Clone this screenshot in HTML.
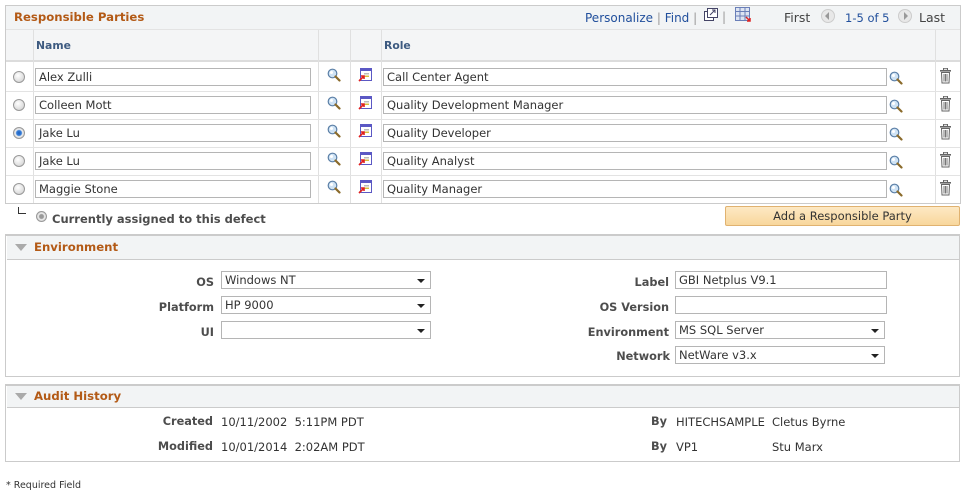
<!DOCTYPE html>
<html><head><meta charset="utf-8"><style>
*{box-sizing:border-box;margin:0;padding:0}
body{width:971px;height:493px;background:#fff;font-family:"DejaVu Sans","Liberation Sans",sans-serif;font-size:11.5px;color:#333;position:relative;overflow:hidden}
.a{position:absolute}
.box{position:absolute;border:1px solid #cbcbcb}
.title{position:absolute;font-weight:bold;font-size:11.7px;color:#b35a16}
.hdr{position:absolute;background:#f2f4f5}
.inp{position:absolute;border:1px solid #b5b5b5;height:18px;background:#fff;padding-left:3px;line-height:17px;font-size:11.5px;color:#333;white-space:nowrap}
.lbl{position:absolute;font-weight:bold;color:#4d4d4d;text-align:right;font-size:11.3px}
.caret{position:absolute;right:5px;top:7px;width:0;height:0;border-left:4px solid transparent;border-right:4px solid transparent;border-top:4px solid #222}
.radio{position:absolute;width:12px;height:12px;border-radius:50%;border:1px solid #999;background:radial-gradient(circle at 40% 35%,#fff,#ccc)}
.vl{position:absolute;width:1px;background:#e0e0e0}
.hl{position:absolute;height:1px;background:#e3e3e3}
.link{color:#214f9c}
</style></head><body>

<div class="box" style="left:5px;top:5px;width:956px;height:199px"></div>
<div class="hdr" style="left:6px;top:6px;width:954px;height:23px"></div>
<div class="title" style="left:14px;top:10px">Responsible Parties</div>
<div class="a link" style="left:585px;top:11px;font-size:12px">Personalize <span style="color:#999">|</span> Find <span style="color:#999">|</span></div>
<svg class="a" style="left:704px;top:8px" width="14" height="13"><rect x="0.5" y="3.5" width="9" height="9" fill="#fff" stroke="#446"/><rect x="3.5" y="0.5" width="10" height="9" fill="#fff" stroke="#446"/><path d="M6 7 L11 2 M8 2 H11 V5" stroke="#446" fill="none"/></svg>
<div class="a" style="left:722px;top:10px;color:#999;font-size:12px">|</div>
<svg class="a" style="left:735px;top:7px" width="17" height="16"><rect x="0.5" y="0.5" width="14" height="13" fill="#dde4f2" stroke="#6a7fb8"/><path d="M0 4.5H15M0 9H15M5 0V14M10 0V14" stroke="#6a7fb8"/><path d="M11 10 L15 14 M12 14 H15 V11" stroke="#d22" stroke-width="1.5" fill="none"/></svg>
<div class="a" style="left:784px;top:10px;font-size:12.5px;color:#444">First</div>
<div class="a" style="left:821px;top:9px;width:14px;height:14px;border-radius:50%;background:#e8e8e8;border:1px solid #ccc"></div>
<div class="a" style="left:825px;top:12px;width:0;height:0;border-top:4px solid transparent;border-bottom:4px solid transparent;border-right:4px solid #999"></div>
<div class="a link" style="left:845px;top:11px;font-size:11.5px">1-5 of 5</div>
<div class="a" style="left:898px;top:9px;width:14px;height:14px;border-radius:50%;background:#e8e8e8;border:1px solid #ccc"></div>
<div class="a" style="left:904px;top:12px;width:0;height:0;border-top:4px solid transparent;border-bottom:4px solid transparent;border-left:4px solid #999"></div>
<div class="a" style="left:919px;top:10px;font-size:12.5px;color:#444">Last</div>

<div class="a" style="left:6px;top:29px;width:954px;height:33px;background:#f4f5f6;border-top:1px solid #e3e3e3;border-bottom:2px solid #dcdcdc"></div>
<div class="a" style="left:36px;top:39px;font-weight:bold;color:#3d5a80;font-size:10.8px">Name</div>
<div class="a" style="left:384px;top:39px;font-weight:bold;color:#3d5a80;font-size:10.8px">Role</div>
<div class="vl" style="left:33px;top:30px;height:173px"></div>
<div class="vl" style="left:318px;top:30px;height:173px"></div>
<div class="vl" style="left:350px;top:30px;height:173px"></div>
<div class="vl" style="left:381px;top:30px;height:173px"></div>
<div class="vl" style="left:935px;top:30px;height:173px"></div>

<div class="hl" style="left:6px;top:91px;width:954px"></div>
<div class="hl" style="left:6px;top:119px;width:954px"></div>
<div class="hl" style="left:6px;top:147px;width:954px"></div>
<div class="hl" style="left:6px;top:175px;width:954px"></div>

<svg width="0" height="0" style="position:absolute"><defs>
<g id="mag"><circle cx="5.5" cy="5.5" r="4.3" fill="#cfe3f5" stroke="#5b7fa6" stroke-width="1.2"/><circle cx="4.5" cy="4.5" r="1.5" fill="#fff"/><path d="M8.5 8.5 L12.5 12.5" stroke="#8a6a2a" stroke-width="2.2" stroke-linecap="round"/></g>
<g id="win"><rect x="2.5" y="0.5" width="11" height="12" fill="#fff" stroke="#5b58c4"/><rect x="2.5" y="0.5" width="11" height="2.5" fill="#5b58c4"/><rect x="6" y="5" width="5" height="1.5" fill="#bbb"/><rect x="6" y="7.5" width="5" height="1.5" fill="#d8c040"/><path d="M1 13 L6 8 M3 8 H6 V11" stroke="#e02020" stroke-width="1.6" fill="none"/></g>
<g id="trash"><rect x="1" y="2" width="11" height="1.6" fill="#666"/><rect x="4.5" y="0.3" width="4" height="2" fill="none" stroke="#666"/><path d="M2.5 4.5 H10.5 L10 15 H3 Z" fill="#fff" stroke="#666"/><path d="M5 6V13.5M6.5 6V13.5M8 6V13.5" stroke="#777"/></g>
</defs></svg>

<div class="radio" style="left:13px;top:71px"></div>
<div class="inp" style="left:35px;top:68px;width:276px">Alex Zulli</div>
<svg class="a" style="left:327px;top:68px" width="14" height="14"><use href="#mag"/></svg>
<svg class="a" style="left:358px;top:68px" width="15" height="14"><use href="#win"/></svg>
<div class="inp" style="left:383px;top:68px;width:504px">Call Center Agent</div>
<svg class="a" style="left:889px;top:71px" width="14" height="14"><use href="#mag"/></svg>
<svg class="a" style="left:939px;top:68px" width="13" height="16"><use href="#trash"/></svg>

<div class="radio" style="left:13px;top:99px"></div>
<div class="inp" style="left:35px;top:96px;width:276px">Colleen Mott</div>
<svg class="a" style="left:327px;top:96px" width="14" height="14"><use href="#mag"/></svg>
<svg class="a" style="left:358px;top:96px" width="15" height="14"><use href="#win"/></svg>
<div class="inp" style="left:383px;top:96px;width:504px">Quality Development Manager</div>
<svg class="a" style="left:889px;top:99px" width="14" height="14"><use href="#mag"/></svg>
<svg class="a" style="left:939px;top:96px" width="13" height="16"><use href="#trash"/></svg>

<div class="radio" style="left:13px;top:127px;background:radial-gradient(circle,#1a5fc0 0,#3a7fd8 2.5px,#eee 3.5px,#ccc 6px)"></div>
<div class="inp" style="left:35px;top:124px;width:276px">Jake Lu</div>
<svg class="a" style="left:327px;top:124px" width="14" height="14"><use href="#mag"/></svg>
<svg class="a" style="left:358px;top:124px" width="15" height="14"><use href="#win"/></svg>
<div class="inp" style="left:383px;top:124px;width:504px">Quality Developer</div>
<svg class="a" style="left:889px;top:127px" width="14" height="14"><use href="#mag"/></svg>
<svg class="a" style="left:939px;top:124px" width="13" height="16"><use href="#trash"/></svg>

<div class="radio" style="left:13px;top:155px"></div>
<div class="inp" style="left:35px;top:152px;width:276px">Jake Lu</div>
<svg class="a" style="left:327px;top:152px" width="14" height="14"><use href="#mag"/></svg>
<svg class="a" style="left:358px;top:152px" width="15" height="14"><use href="#win"/></svg>
<div class="inp" style="left:383px;top:152px;width:504px">Quality Analyst</div>
<svg class="a" style="left:889px;top:155px" width="14" height="14"><use href="#mag"/></svg>
<svg class="a" style="left:939px;top:152px" width="13" height="16"><use href="#trash"/></svg>

<div class="radio" style="left:13px;top:183px"></div>
<div class="inp" style="left:35px;top:180px;width:276px">Maggie Stone</div>
<svg class="a" style="left:327px;top:180px" width="14" height="14"><use href="#mag"/></svg>
<svg class="a" style="left:358px;top:180px" width="15" height="14"><use href="#win"/></svg>
<div class="inp" style="left:383px;top:180px;width:504px">Quality Manager</div>
<svg class="a" style="left:889px;top:183px" width="14" height="14"><use href="#mag"/></svg>
<svg class="a" style="left:939px;top:180px" width="13" height="16"><use href="#trash"/></svg>

<div class="a" style="left:18px;top:207px;width:8px;height:7px;border-left:1px solid #333;border-bottom:1px solid #333"></div>
<div class="radio" style="left:36px;top:211px;width:11px;height:11px;background:radial-gradient(circle,#999 0,#999 2px,#eee 3px,#ccc 5px)"></div>
<div class="a" style="left:52px;top:212px;font-weight:bold;color:#4d4d4d;font-size:11.5px">Currently assigned to this defect</div>
<div class="a" style="left:725px;top:206px;width:235px;height:20px;border:1px solid #e0b270;border-radius:2px;background:linear-gradient(#fde9c4,#f8d79c);text-align:center;line-height:18px;color:#333;font-size:11.5px">Add a Responsible Party</div>

<div class="box" style="left:5px;top:234px;width:955px;height:143px;border-width:2px 1px 1px 1px"></div>
<div class="hdr" style="left:7px;top:236px;width:952px;height:24px;border-bottom:1px solid #cbcbcb"></div>
<div class="a" style="left:15px;top:244px;width:0;height:0;border-left:6px solid transparent;border-right:6px solid transparent;border-top:7px solid #aaa"></div>
<div class="title" style="left:34px;top:240px">Environment</div>

<div class="lbl" style="left:100px;width:114px;top:276px">OS</div>
<div class="inp" style="left:221px;top:271px;width:210px">Windows NT<div class="caret"></div></div>
<div class="lbl" style="left:100px;width:114px;top:301px">Platform</div>
<div class="inp" style="left:221px;top:296px;width:210px">HP 9000<div class="caret"></div></div>
<div class="lbl" style="left:100px;width:114px;top:326px">UI</div>
<div class="inp" style="left:221px;top:321px;width:210px"><div class="caret"></div></div>

<div class="lbl" style="left:540px;width:129px;top:276px">Label</div>
<div class="inp" style="left:675px;top:271px;width:212px">GBI Netplus V9.1</div>
<div class="lbl" style="left:540px;width:129px;top:301px">OS Version</div>
<div class="inp" style="left:675px;top:296px;width:212px"></div>
<div class="lbl" style="left:540px;width:129px;top:326px">Environment</div>
<div class="inp" style="left:675px;top:321px;width:210px">MS SQL Server<div class="caret"></div></div>
<div class="lbl" style="left:540px;width:130px;top:350px">Network</div>
<div class="inp" style="left:675px;top:346px;width:210px">NetWare v3.x<div class="caret"></div></div>

<div class="box" style="left:5px;top:384px;width:955px;height:78px;border-width:2px 1px 1px 1px"></div>
<div class="hdr" style="left:7px;top:386px;width:952px;height:22px;border-bottom:1px solid #cbcbcb"></div>
<div class="a" style="left:15px;top:393px;width:0;height:0;border-left:6px solid transparent;border-right:6px solid transparent;border-top:7px solid #aaa"></div>
<div class="title" style="left:34px;top:389px">Audit History</div>

<div class="lbl" style="left:100px;width:113px;top:415px">Created</div>
<div class="a" style="left:221px;top:415px">10/11/2002&nbsp; 5:11PM PDT</div>
<div class="lbl" style="left:100px;width:113px;top:440px">Modified</div>
<div class="a" style="left:221px;top:440px">10/01/2014&nbsp; 2:02AM PDT</div>
<div class="lbl" style="left:600px;width:67px;top:415px">By</div>
<div class="a" style="left:676px;top:415px">HITECHSAMPLE</div>
<div class="a" style="left:772px;top:415px">Cletus Byrne</div>
<div class="lbl" style="left:600px;width:67px;top:440px">By</div>
<div class="a" style="left:676px;top:440px">VP1</div>
<div class="a" style="left:772px;top:440px">Stu Marx</div>

<div class="a" style="left:6px;top:480px;font-size:9.5px;color:#333">* Required Field</div>
</body></html>
